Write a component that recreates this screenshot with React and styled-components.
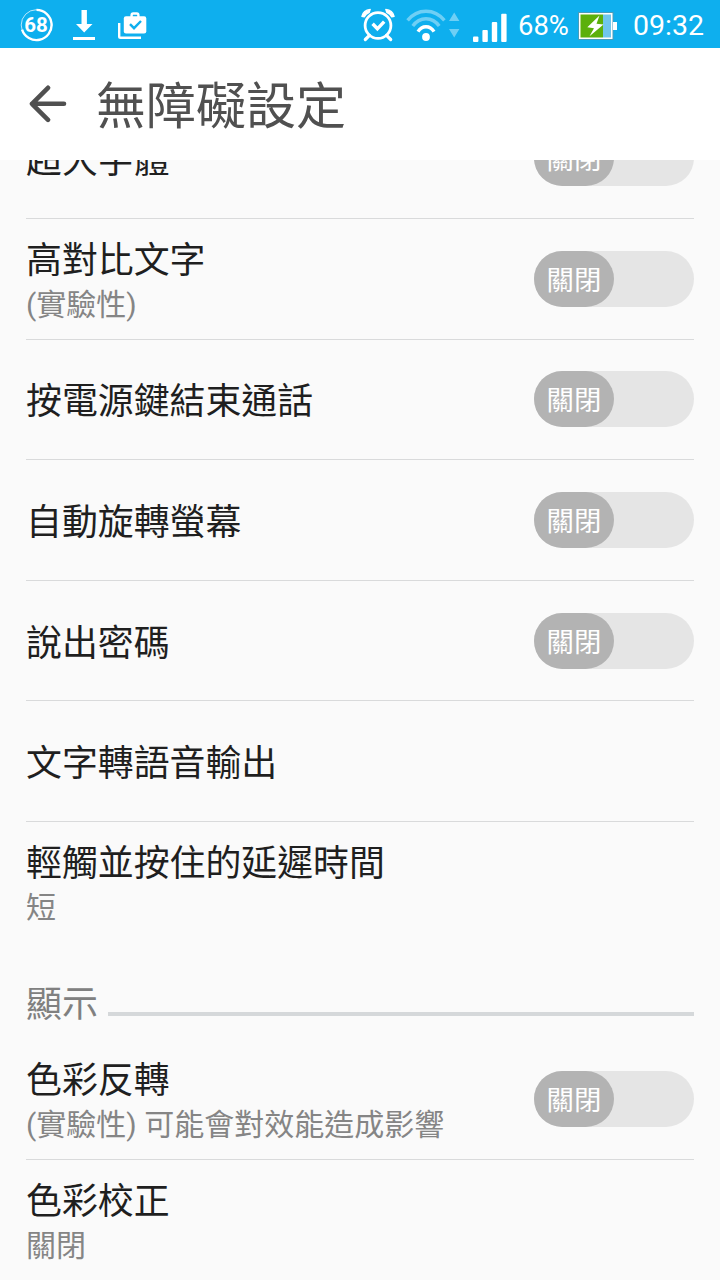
import React from "react";
import styled, { createGlobalStyle } from "styled-components";

const rows = [
    { title: "超大字體", toggle: true },
    { title: "高對比文字", summary: "(實驗性)", toggle: true },
    { title: "按電源鍵結束通話", toggle: true },
    { title: "自動旋轉螢幕", toggle: true },
    { title: "說出密碼", toggle: true },
    { title: "文字轉語音輸出" },
    { title: "輕觸並按住的延遲時間", summary: "短", last: true },
];

const displayRows = [
    { title: "色彩反轉", summary: "(實驗性) 可能會對效能造成影響", toggle: true },
    { title: "色彩校正", summary: "關閉", last: true },
];

function Setting({ title, summary, toggle, last }) {
    return (
        <Row $last={last}>
            <Texts $two={!!summary}>
                <Title>{title}</Title>
                {summary && <Summary>{summary}</Summary>}
            </Texts>
            {toggle && (
                <Switch type="button" role="switch" aria-checked="false">
                    <Thumb>關閉</Thumb>
                </Switch>
            )}
        </Row>
    );
}

function StatusBar() {
    return (
        <Status>
            <Level>
                <svg width="34" height="34" viewBox="0 0 34 34" fill="none" stroke="#fff">
                    <circle cx="16.5" cy="17" r="15.3" strokeWidth="1" opacity=".7" />
                    <path d="M16.5 1.9A15.1 15.1 0 1 1 2.1 21.6" strokeWidth="2.4" />
                </svg>
                <LevelText>68</LevelText>
            </Level>
            <DownloadIcon width="22" height="30" viewBox="0 0 22 30" fill="#fff">
                <path d="M8.5 0h5.4v14h5.6L11.2 22.5 3 14h5.5zM0 27h22v3H0z" />
            </DownloadIcon>
            <CaseIcon width="29" height="28" viewBox="0 0 29 28">
                <path d="M1.2 11v13.5q0 1.3 1.3 1.3H23" fill="none" stroke="#fff" strokeWidth="2.4" />
                <path d="M13.6 5V3.2q0-1.7 1.6-1.7h3.6q1.6 0 1.6 1.7V5" fill="none" stroke="#fff" strokeWidth="2.4" />
                <rect x="5.8" y="4.3" width="22.5" height="17.2" rx="2.2" fill="#fff" />
                <path d="m12 12.2 4 4 7-7.2" fill="none" stroke="#0eafee" strokeWidth="2.4" />
            </CaseIcon>
            <Spacer />
            <AlarmIcon width="34" height="34" viewBox="0 0 34 34" fill="none" stroke="#fff" strokeLinecap="round">
                <circle cx="17" cy="17.5" r="12.9" strokeWidth="2.8" />
                <path d="M8.5 27.3 4.3 31.5M25.5 27.3l4.2 4.2" strokeWidth="3.2" />
                <path d="M.9 8.4Q2.4 2 9.2 1.4L8.2 4.4Q4.8 5.8 3.2 8.8zM33.1 8.4Q31.6 2 24.8 1.4l1 3q3.4 1.4 5 4.4z" fill="#fff" strokeWidth="1.4" strokeLinejoin="round" />
                <path d="m11.6 15.8 4.8 5 6.8-7.2" strokeWidth="3.4" strokeLinecap="butt" />
            </AlarmIcon>
            <WifiIcon width="54" height="34" viewBox="0 0 54 34" fill="none" stroke="#fff" strokeWidth="3.4">
                <path d="M1.6 12.4Q9 3.2 20 3.2t18.4 9.2" opacity=".4" />
                <path d="M6.8 18Q12 10.7 20 10.7T33.2 18" opacity=".4" />
                <path d="M12 23.6Q15 18.8 20 18.8t8 4.8" />
                <circle cx="20" cy="29" r="3.9" fill="#fff" stroke="none" />
                <path d="M43 13 48.2 4.6l5.2 8.4zM43 21h10.4l-5.2 8.6z" fill="#fff" stroke="none" opacity=".4" />
            </WifiIcon>
            <SignalIcon width="34" height="30" viewBox="0 0 34 30" fill="#fff">
                <rect x="0" y="23.5" width="5.4" height="5.6" rx="1" />
                <rect x="9.4" y="17" width="5.4" height="12.1" rx="1" />
                <rect x="18.8" y="9" width="5.4" height="20.1" rx="1" />
                <rect x="28.2" y="0.8" width="5.4" height="28.3" rx="1" />
            </SignalIcon>
            <Percent>68%</Percent>
            <BatteryIcon width="40" height="28" viewBox="0 0 40 28">
                <rect x=".5" y=".5" width="34.5" height="27" fill="#fff" stroke="#4a9cb8" strokeWidth="1" />
                <path d="M35 10h4v8h-4z" fill="#fff" />
                <path d="M2.5 2.5h22.5v23H2.5z" fill="#5cb00b" />
                <path d="M25 2.5h8v23h-8z" fill="#70c6ec" />
                <path d="M21.5 3.5 9.3 15.3l6.7.9-4.5 8L25.5 12.5l-7-.8z" fill="#fff" />
            </BatteryIcon>
            <Clock>09:32</Clock>
        </Status>
    );
}

function App() {
    return (
        <Screen>
            <GlobalStyle />
            <StatusBar />
            <Header>
                <BackIcon width="38" height="38" viewBox="0 0 38 38">
                    <path d="M35 18.8H3M19 2.8 3 18.8l16 16" />
                </BackIcon>
                <Heading>無障礙設定</Heading>
            </Header>
            <Scroll>
                <List>
                    {rows.map((row) => (
                        <Setting key={row.title} {...row} />
                    ))}
                    <Section>
                        <SectionName>顯示</SectionName>
                        <SectionLine />
                    </Section>
                    {displayRows.map((row) => (
                        <Setting key={row.title} {...row} />
                    ))}
                </List>
            </Scroll>
        </Screen>
    );
}

export default App;

const GlobalStyle = createGlobalStyle`
    * {
        box-sizing:border-box;
    }

    body {
        margin:0;
        background:#fafafa;
        font-family:Roboto, "Noto Sans CJK TC", sans-serif;
    }
`
const Screen = styled.div`
    width:720px;
    height:1280px;
    display:flex;
    flex-direction:column;
    overflow:hidden;
    background:#fafafa;
`
const Status = styled.div`
    height:48px;
    flex:none;
    display:flex;
    align-items:flex-start;
    padding:0 16px 0 20px;
    background:#0eafee;
    color:white;

svg {
    flex:none;
    display:block;
}
`
const Level = styled.div`
    display:grid;
    place-items:center;
    margin-top:8px;

> * {
    grid-area:1 / 1;
}
`
const LevelText = styled.span`
    margin-right:2px;
    font-size:20.5px;
    line-height:34px;
    font-weight:bold;
`
const DownloadIcon = styled.svg`
    margin:10px 0 0 19px;
`
const CaseIcon = styled.svg`
    margin:12px 0 0 23px;
`
const Spacer = styled.div`
    flex:1;
`
const AlarmIcon = styled.svg`
    margin:8px 11px 0 0;
`
const WifiIcon = styled.svg`
    margin:8px 13px 0 0;
`
const SignalIcon = styled.svg`
    margin:13px 11px 0 0;
`
const Percent = styled.span`
    width:52px;
    margin-right:8px;
    font-size:27.4px;
    line-height:53px;
`
const BatteryIcon = styled.svg`
    margin:12px 15px 0 0;
`
const Clock = styled.span`
    width:71px;
    font-size:28.5px;
    line-height:52px;
`
const Header = styled.header`
    height:112px;
    flex:none;
    display:flex;
    align-items:center;
    padding-left:29px;
    background:white;
`
const BackIcon = styled.svg`
    margin-right:29px;
    fill:none;
    stroke:#505050;
    stroke-width:4.6;
    stroke-linecap:round;
    stroke-linejoin:round;
`
const Heading = styled.h1`
    margin:0;
    padding-top:6px;
    color:#505050;
    font-size:50px;
    line-height:72px;
    font-weight:normal;
`
const Scroll = styled.main`
    flex:1;
    min-height:0;
    overflow:hidden;
`
const List = styled.div`
    margin-top:-61.6px;
    padding:0 26px;
`
const Row = styled.div`
    height:120.6px;
    display:flex;
    align-items:center;
    justify-content:space-between;
    border-bottom:1px solid ${(p) => (p.$last ? "transparent" : "#d9dadb")};
`
const Texts = styled.div`
    padding-top:${(p) => (p.$two ? "6px" : "6px")};
`
const Title = styled.div`
    color:#1f1f1f;
    font-size:35.9px;
    line-height:46px;
`
const Summary = styled.div`
    color:#858585;
    font-size:30px;
    line-height:41px;
`
const Switch = styled.button`
    width:160px;
    height:56px;
    flex:none;
    padding:0;
    border:none;
    border-radius:28px;
    background:#e5e5e5;
    font-family:inherit;
`
const Thumb = styled.span`
    width:80px;
    height:56px;
    display:block;
    border-radius:28px;
    background:#b3b3b3;
    color:white;
    font-size:27.4px;
    line-height:60px;
    text-align:center;
`
const Section = styled.div`
    height:96.4px;
    display:flex;
    align-items:center;
    padding-top:28px;
`
const SectionName = styled.div`
    color:#808080;
    font-size:35.9px;
    line-height:46px;
`
const SectionLine = styled.div`
    height:4px;
    flex:1;
    margin:19px 0 0 10px;
    background:#d5d8da;
`
